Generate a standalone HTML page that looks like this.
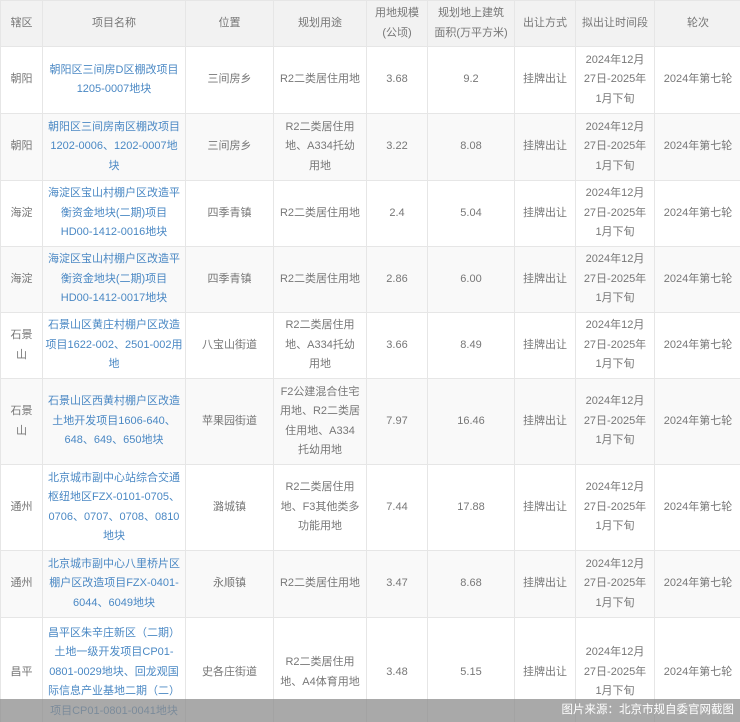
<!DOCTYPE html>
<html><head><meta charset="utf-8"><style>
html,body{margin:0;padding:0;background:#fff;width:740px;height:722px;overflow:hidden;position:relative}
table{border-collapse:collapse;table-layout:fixed;width:741px;font-family:"Liberation Sans","Noto Sans CJK SC",sans-serif;font-size:11px;color:#777;position:absolute;left:0;top:0}
td,th{border:1px solid #e6e6e6;text-align:center;vertical-align:middle;padding:0 2px;line-height:19.5px;font-weight:normal;word-break:break-all}
th{background:#f2f2f2;height:45px}
tr:nth-child(odd) td{background:#f9f9f9}
a{color:#4a88c4;text-decoration:none}
.bar{position:absolute;left:0;top:699px;width:740px;height:23px;background:rgba(140,140,140,.75);color:#fff;font-family:"Liberation Sans","Noto Sans CJK SC",sans-serif;font-size:11.5px;line-height:23px;text-align:right;box-sizing:border-box;padding-right:6px}
</style></head><body>
<table>
<colgroup><col style="width:42px"><col style="width:143px"><col style="width:88px"><col style="width:93px"><col style="width:61px"><col style="width:87px"><col style="width:61px"><col style="width:79px"><col style="width:87px"></colgroup>
<tr><th>辖区</th><th>项目名称</th><th>位置</th><th>规划用途</th><th>用地规模<br>(公顷)</th><th>规划地上建筑<br>面积(万平方米)</th><th>出让方式</th><th>拟出让时间段</th><th>轮次</th></tr>
<tr style="height:67px"><td>朝阳</td><td><a>朝阳区三间房D区棚改项目<br>1205-0007地块</a></td><td>三间房乡</td><td>R2二类居住用地</td><td>3.68</td><td>9.2</td><td>挂牌出让</td><td>2024年12月<br>27日-2025年<br>1月下旬</td><td>2024年第七轮</td></tr>
<tr style="height:67px"><td>朝阳</td><td><a>朝阳区三间房南区棚改项目<br>1202-0006、1202-0007地<br>块</a></td><td>三间房乡</td><td>R2二类居住用<br>地、A334托幼<br>用地</td><td>3.22</td><td>8.08</td><td>挂牌出让</td><td>2024年12月<br>27日-2025年<br>1月下旬</td><td>2024年第七轮</td></tr>
<tr style="height:66px"><td>海淀</td><td><a>海淀区宝山村棚户区改造平<br>衡资金地块(二期)项目<br>HD00-1412-0016地块</a></td><td>四季青镇</td><td>R2二类居住用地</td><td>2.4</td><td>5.04</td><td>挂牌出让</td><td>2024年12月<br>27日-2025年<br>1月下旬</td><td>2024年第七轮</td></tr>
<tr style="height:66px"><td>海淀</td><td><a>海淀区宝山村棚户区改造平<br>衡资金地块(二期)项目<br>HD00-1412-0017地块</a></td><td>四季青镇</td><td>R2二类居住用地</td><td>2.86</td><td>6.00</td><td>挂牌出让</td><td>2024年12月<br>27日-2025年<br>1月下旬</td><td>2024年第七轮</td></tr>
<tr style="height:66px"><td>石景<br>山</td><td><a>石景山区黄庄村棚户区改造<br>项目1622-002、2501-002用<br>地</a></td><td>八宝山街道</td><td>R2二类居住用<br>地、A334托幼<br>用地</td><td>3.66</td><td>8.49</td><td>挂牌出让</td><td>2024年12月<br>27日-2025年<br>1月下旬</td><td>2024年第七轮</td></tr>
<tr style="height:86px"><td>石景<br>山</td><td><a>石景山区西黄村棚户区改造<br>土地开发项目1606-640、<br>648、649、650地块</a></td><td>苹果园街道</td><td>F2公建混合住宅<br>用地、R2二类居<br>住用地、A334<br>托幼用地</td><td>7.97</td><td>16.46</td><td>挂牌出让</td><td>2024年12月<br>27日-2025年<br>1月下旬</td><td>2024年第七轮</td></tr>
<tr style="height:86px"><td>通州</td><td><a>北京城市副中心站综合交通<br>枢纽地区FZX-0101-0705、<br>0706、0707、0708、0810<br>地块</a></td><td>潞城镇</td><td>R2二类居住用<br>地、F3其他类多<br>功能用地</td><td>7.44</td><td>17.88</td><td>挂牌出让</td><td>2024年12月<br>27日-2025年<br>1月下旬</td><td>2024年第七轮</td></tr>
<tr style="height:67px"><td>通州</td><td><a>北京城市副中心八里桥片区<br>棚户区改造项目FZX-0401-<br>6044、6049地块</a></td><td>永顺镇</td><td>R2二类居住用地</td><td>3.47</td><td>8.68</td><td>挂牌出让</td><td>2024年12月<br>27日-2025年<br>1月下旬</td><td>2024年第七轮</td></tr>
<tr style="height:110px"><td>昌平</td><td><a>昌平区朱辛庄新区（二期）<br>土地一级开发项目CP01-<br>0801-0029地块、回龙观国<br>际信息产业基地二期（二）<br>项目CP01-0801-0041地块</a></td><td>史各庄街道</td><td>R2二类居住用<br>地、A4体育用地</td><td>3.48</td><td>5.15</td><td>挂牌出让</td><td>2024年12月<br>27日-2025年<br>1月下旬</td><td>2024年第七轮</td></tr>
</table>
<div class="bar">图片来源：北京市规自委官网截图</div>
</body></html>
